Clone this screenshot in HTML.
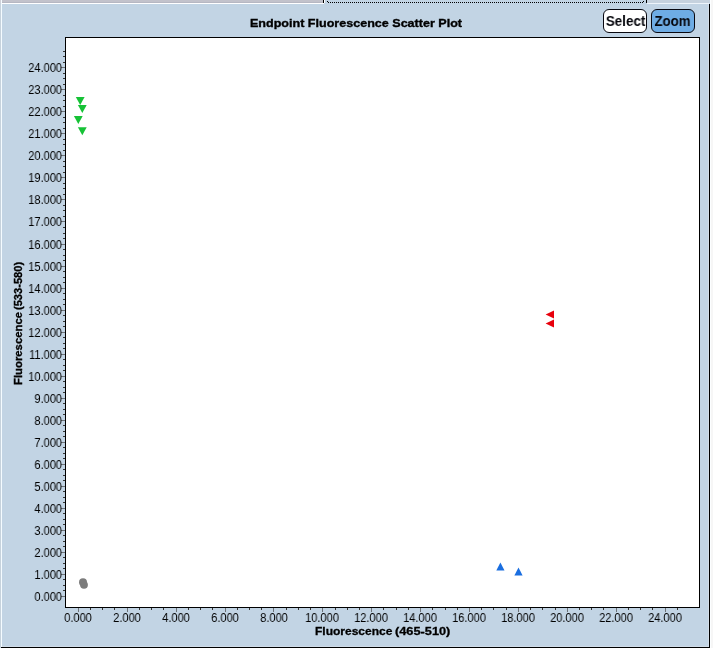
<!DOCTYPE html>
<html><head><meta charset="utf-8"><style>
html,body{margin:0;padding:0;}
*{will-change:transform;}
body{width:713px;height:648px;position:relative;overflow:hidden;background:#c2d4e4;font-family:"Liberation Sans",sans-serif;color:#000;}
svg{position:absolute;left:0;top:0;}
.t{position:absolute;white-space:nowrap;line-height:1;}
.title{position:absolute;left:250px;top:18px;font-weight:bold;font-size:11.3px;white-space:nowrap;line-height:1;transform-origin:0 0;transform:scaleX(1.111);-webkit-text-stroke:0.35px #000;}
.btn{position:absolute;top:9px;height:22px;border:1px solid #080810;border-radius:6px;box-sizing:content-box;}
.btn span{position:absolute;left:0;right:0;top:0;text-align:center;font-weight:bold;font-size:14px;line-height:23px;color:#05060c;white-space:nowrap;transform:scaleX(0.93);}
.yl{position:absolute;left:0;width:62px;text-align:right;font-size:12px;line-height:14px;height:14px;white-space:nowrap;transform-origin:62px 0;transform:scaleX(0.92);}
.xl{position:absolute;top:611px;width:60px;text-align:center;font-size:12px;line-height:14px;height:14px;white-space:nowrap;transform:scaleX(0.92);}
.xlab{position:absolute;left:315px;top:624px;font-weight:bold;font-size:11.3px;line-height:14px;white-space:nowrap;transform-origin:0 0;transform:scaleX(1.09);-webkit-text-stroke:0.3px #000;}
.ylab{position:absolute;left:11px;top:384px;transform-origin:0 0;transform:rotate(-90deg);font-weight:bold;font-size:11.1px;line-height:14px;white-space:nowrap;-webkit-text-stroke:0.3px #000;}
</style></head><body>
<svg width="713" height="648" shape-rendering="crispEdges">
<rect x="0" y="0" width="323" height="3" fill="#c2c2cb"/>
<rect x="0" y="2" width="323" height="1" fill="#b6b7c2"/>
<rect x="0" y="0" width="1" height="3" fill="#d0d0d8"/>
<rect x="323" y="0" width="1" height="3" fill="#000"/>
<rect x="324" y="0" width="1" height="3" fill="#fff"/>
<rect x="646" y="0" width="1" height="3" fill="#000"/>
<rect x="647" y="0" width="63" height="3" fill="#c6d2de"/>
<rect x="0" y="3" width="324" height="1" fill="#fff"/>
<rect x="647" y="3" width="62" height="1" fill="#eef4fa"/>
<rect x="0" y="3" width="1" height="645" fill="#c6d2dc"/>
<rect x="1" y="0" width="1" height="647" fill="#f4fbff"/>
<rect x="708" y="4" width="1" height="643" fill="#d2dde8"/>
<rect x="2" y="646" width="707" height="1" fill="#d0dce8"/>
<rect x="1" y="647" width="709" height="1" fill="#000"/>
<rect x="709" y="4" width="1" height="644" fill="#000"/>
<rect x="710" y="0" width="3" height="648" fill="#f6f6f6"/>
<rect x="710" y="0" width="1" height="648" fill="#fcfeff"/>
<rect x="328" y="2" width="1" height="1" fill="#000"/>
<rect x="330" y="2" width="1" height="1" fill="#000"/>
<rect x="332" y="2" width="1" height="1" fill="#000"/>
<rect x="334" y="2" width="1" height="1" fill="#000"/>
<rect x="336" y="2" width="1" height="1" fill="#000"/>
<rect x="338" y="2" width="1" height="1" fill="#000"/>
<rect x="340" y="2" width="1" height="1" fill="#000"/>
<rect x="342" y="2" width="1" height="1" fill="#000"/>
<rect x="344" y="2" width="1" height="1" fill="#000"/>
<rect x="346" y="2" width="1" height="1" fill="#000"/>
<rect x="348" y="2" width="1" height="1" fill="#000"/>
<rect x="350" y="2" width="1" height="1" fill="#000"/>
<rect x="352" y="2" width="1" height="1" fill="#000"/>
<rect x="354" y="2" width="1" height="1" fill="#000"/>
<rect x="356" y="2" width="1" height="1" fill="#000"/>
<rect x="358" y="2" width="1" height="1" fill="#000"/>
<rect x="360" y="2" width="1" height="1" fill="#000"/>
<rect x="362" y="2" width="1" height="1" fill="#000"/>
<rect x="364" y="2" width="1" height="1" fill="#000"/>
<rect x="366" y="2" width="1" height="1" fill="#000"/>
<rect x="368" y="2" width="1" height="1" fill="#000"/>
<rect x="370" y="2" width="1" height="1" fill="#000"/>
<rect x="372" y="2" width="1" height="1" fill="#000"/>
<rect x="374" y="2" width="1" height="1" fill="#000"/>
<rect x="376" y="2" width="1" height="1" fill="#000"/>
<rect x="378" y="2" width="1" height="1" fill="#000"/>
<rect x="380" y="2" width="1" height="1" fill="#000"/>
<rect x="382" y="2" width="1" height="1" fill="#000"/>
<rect x="384" y="2" width="1" height="1" fill="#000"/>
<rect x="386" y="2" width="1" height="1" fill="#000"/>
<rect x="388" y="2" width="1" height="1" fill="#000"/>
<rect x="390" y="2" width="1" height="1" fill="#000"/>
<rect x="392" y="2" width="1" height="1" fill="#000"/>
<rect x="394" y="2" width="1" height="1" fill="#000"/>
<rect x="396" y="2" width="1" height="1" fill="#000"/>
<rect x="398" y="2" width="1" height="1" fill="#000"/>
<rect x="400" y="2" width="1" height="1" fill="#000"/>
<rect x="402" y="2" width="1" height="1" fill="#000"/>
<rect x="404" y="2" width="1" height="1" fill="#000"/>
<rect x="406" y="2" width="1" height="1" fill="#000"/>
<rect x="408" y="2" width="1" height="1" fill="#000"/>
<rect x="410" y="2" width="1" height="1" fill="#000"/>
<rect x="412" y="2" width="1" height="1" fill="#000"/>
<rect x="414" y="2" width="1" height="1" fill="#000"/>
<rect x="416" y="2" width="1" height="1" fill="#000"/>
<rect x="418" y="2" width="1" height="1" fill="#000"/>
<rect x="420" y="2" width="1" height="1" fill="#000"/>
<rect x="422" y="2" width="1" height="1" fill="#000"/>
<rect x="424" y="2" width="1" height="1" fill="#000"/>
<rect x="426" y="2" width="1" height="1" fill="#000"/>
<rect x="428" y="2" width="1" height="1" fill="#000"/>
<rect x="430" y="2" width="1" height="1" fill="#000"/>
<rect x="432" y="2" width="1" height="1" fill="#000"/>
<rect x="434" y="2" width="1" height="1" fill="#000"/>
<rect x="436" y="2" width="1" height="1" fill="#000"/>
<rect x="438" y="2" width="1" height="1" fill="#000"/>
<rect x="440" y="2" width="1" height="1" fill="#000"/>
<rect x="442" y="2" width="1" height="1" fill="#000"/>
<rect x="444" y="2" width="1" height="1" fill="#000"/>
<rect x="446" y="2" width="1" height="1" fill="#000"/>
<rect x="448" y="2" width="1" height="1" fill="#000"/>
<rect x="450" y="2" width="1" height="1" fill="#000"/>
<rect x="452" y="2" width="1" height="1" fill="#000"/>
<rect x="454" y="2" width="1" height="1" fill="#000"/>
<rect x="456" y="2" width="1" height="1" fill="#000"/>
<rect x="458" y="2" width="1" height="1" fill="#000"/>
<rect x="460" y="2" width="1" height="1" fill="#000"/>
<rect x="462" y="2" width="1" height="1" fill="#000"/>
<rect x="464" y="2" width="1" height="1" fill="#000"/>
<rect x="466" y="2" width="1" height="1" fill="#000"/>
<rect x="468" y="2" width="1" height="1" fill="#000"/>
<rect x="470" y="2" width="1" height="1" fill="#000"/>
<rect x="472" y="2" width="1" height="1" fill="#000"/>
<rect x="474" y="2" width="1" height="1" fill="#000"/>
<rect x="476" y="2" width="1" height="1" fill="#000"/>
<rect x="478" y="2" width="1" height="1" fill="#000"/>
<rect x="480" y="2" width="1" height="1" fill="#000"/>
<rect x="482" y="2" width="1" height="1" fill="#000"/>
<rect x="484" y="2" width="1" height="1" fill="#000"/>
<rect x="486" y="2" width="1" height="1" fill="#000"/>
<rect x="488" y="2" width="1" height="1" fill="#000"/>
<rect x="490" y="2" width="1" height="1" fill="#000"/>
<rect x="492" y="2" width="1" height="1" fill="#000"/>
<rect x="494" y="2" width="1" height="1" fill="#000"/>
<rect x="496" y="2" width="1" height="1" fill="#000"/>
<rect x="498" y="2" width="1" height="1" fill="#000"/>
<rect x="500" y="2" width="1" height="1" fill="#000"/>
<rect x="502" y="2" width="1" height="1" fill="#000"/>
<rect x="504" y="2" width="1" height="1" fill="#000"/>
<rect x="506" y="2" width="1" height="1" fill="#000"/>
<rect x="508" y="2" width="1" height="1" fill="#000"/>
<rect x="510" y="2" width="1" height="1" fill="#000"/>
<rect x="512" y="2" width="1" height="1" fill="#000"/>
<rect x="514" y="2" width="1" height="1" fill="#000"/>
<rect x="516" y="2" width="1" height="1" fill="#000"/>
<rect x="518" y="2" width="1" height="1" fill="#000"/>
<rect x="520" y="2" width="1" height="1" fill="#000"/>
<rect x="522" y="2" width="1" height="1" fill="#000"/>
<rect x="524" y="2" width="1" height="1" fill="#000"/>
<rect x="526" y="2" width="1" height="1" fill="#000"/>
<rect x="528" y="2" width="1" height="1" fill="#000"/>
<rect x="530" y="2" width="1" height="1" fill="#000"/>
<rect x="532" y="2" width="1" height="1" fill="#000"/>
<rect x="534" y="2" width="1" height="1" fill="#000"/>
<rect x="536" y="2" width="1" height="1" fill="#000"/>
<rect x="538" y="2" width="1" height="1" fill="#000"/>
<rect x="540" y="2" width="1" height="1" fill="#000"/>
<rect x="542" y="2" width="1" height="1" fill="#000"/>
<rect x="544" y="2" width="1" height="1" fill="#000"/>
<rect x="546" y="2" width="1" height="1" fill="#000"/>
<rect x="548" y="2" width="1" height="1" fill="#000"/>
<rect x="550" y="2" width="1" height="1" fill="#000"/>
<rect x="552" y="2" width="1" height="1" fill="#000"/>
<rect x="554" y="2" width="1" height="1" fill="#000"/>
<rect x="556" y="2" width="1" height="1" fill="#000"/>
<rect x="558" y="2" width="1" height="1" fill="#000"/>
<rect x="560" y="2" width="1" height="1" fill="#000"/>
<rect x="562" y="2" width="1" height="1" fill="#000"/>
<rect x="564" y="2" width="1" height="1" fill="#000"/>
<rect x="566" y="2" width="1" height="1" fill="#000"/>
<rect x="568" y="2" width="1" height="1" fill="#000"/>
<rect x="570" y="2" width="1" height="1" fill="#000"/>
<rect x="572" y="2" width="1" height="1" fill="#000"/>
<rect x="574" y="2" width="1" height="1" fill="#000"/>
<rect x="576" y="2" width="1" height="1" fill="#000"/>
<rect x="578" y="2" width="1" height="1" fill="#000"/>
<rect x="580" y="2" width="1" height="1" fill="#000"/>
<rect x="582" y="2" width="1" height="1" fill="#000"/>
<rect x="584" y="2" width="1" height="1" fill="#000"/>
<rect x="586" y="2" width="1" height="1" fill="#000"/>
<rect x="588" y="2" width="1" height="1" fill="#000"/>
<rect x="590" y="2" width="1" height="1" fill="#000"/>
<rect x="592" y="2" width="1" height="1" fill="#000"/>
<rect x="594" y="2" width="1" height="1" fill="#000"/>
<rect x="596" y="2" width="1" height="1" fill="#000"/>
<rect x="598" y="2" width="1" height="1" fill="#000"/>
<rect x="600" y="2" width="1" height="1" fill="#000"/>
<rect x="602" y="2" width="1" height="1" fill="#000"/>
<rect x="604" y="2" width="1" height="1" fill="#000"/>
<rect x="606" y="2" width="1" height="1" fill="#000"/>
<rect x="608" y="2" width="1" height="1" fill="#000"/>
<rect x="610" y="2" width="1" height="1" fill="#000"/>
<rect x="612" y="2" width="1" height="1" fill="#000"/>
<rect x="614" y="2" width="1" height="1" fill="#000"/>
<rect x="616" y="2" width="1" height="1" fill="#000"/>
<rect x="618" y="2" width="1" height="1" fill="#000"/>
<rect x="620" y="2" width="1" height="1" fill="#000"/>
<rect x="622" y="2" width="1" height="1" fill="#000"/>
<rect x="624" y="2" width="1" height="1" fill="#000"/>
<rect x="626" y="2" width="1" height="1" fill="#000"/>
<rect x="628" y="2" width="1" height="1" fill="#000"/>
<rect x="630" y="2" width="1" height="1" fill="#000"/>
<rect x="632" y="2" width="1" height="1" fill="#000"/>
<rect x="634" y="2" width="1" height="1" fill="#000"/>
<rect x="636" y="2" width="1" height="1" fill="#000"/>
<rect x="638" y="2" width="1" height="1" fill="#000"/>
<rect x="640" y="2" width="1" height="1" fill="#000"/>
<rect x="642" y="2" width="1" height="1" fill="#000"/>
<rect x="327" y="1" width="1" height="1" fill="#000"/>
<rect x="643" y="1" width="1" height="1" fill="#000"/>
<rect x="65" y="37" width="635" height="571" fill="#000"/>
<rect x="66" y="38" width="633" height="569" fill="#fff"/>
<rect x="61" y="596" width="4" height="1" fill="#6c7278"/>
<rect x="63" y="590" width="2" height="1" fill="#343434"/>
<rect x="63" y="585" width="2" height="1" fill="#343434"/>
<rect x="63" y="579" width="2" height="1" fill="#343434"/>
<rect x="61" y="574" width="4" height="1" fill="#6c7278"/>
<rect x="63" y="568" width="2" height="1" fill="#343434"/>
<rect x="63" y="563" width="2" height="1" fill="#343434"/>
<rect x="63" y="557" width="2" height="1" fill="#343434"/>
<rect x="61" y="552" width="4" height="1" fill="#6c7278"/>
<rect x="63" y="546" width="2" height="1" fill="#343434"/>
<rect x="63" y="541" width="2" height="1" fill="#343434"/>
<rect x="63" y="535" width="2" height="1" fill="#343434"/>
<rect x="61" y="530" width="4" height="1" fill="#6c7278"/>
<rect x="63" y="524" width="2" height="1" fill="#343434"/>
<rect x="63" y="519" width="2" height="1" fill="#343434"/>
<rect x="63" y="513" width="2" height="1" fill="#343434"/>
<rect x="61" y="508" width="4" height="1" fill="#6c7278"/>
<rect x="63" y="502" width="2" height="1" fill="#343434"/>
<rect x="63" y="497" width="2" height="1" fill="#343434"/>
<rect x="63" y="491" width="2" height="1" fill="#343434"/>
<rect x="61" y="486" width="4" height="1" fill="#6c7278"/>
<rect x="63" y="480" width="2" height="1" fill="#343434"/>
<rect x="63" y="475" width="2" height="1" fill="#343434"/>
<rect x="63" y="469" width="2" height="1" fill="#343434"/>
<rect x="61" y="464" width="4" height="1" fill="#6c7278"/>
<rect x="63" y="458" width="2" height="1" fill="#343434"/>
<rect x="63" y="453" width="2" height="1" fill="#343434"/>
<rect x="63" y="447" width="2" height="1" fill="#343434"/>
<rect x="61" y="442" width="4" height="1" fill="#6c7278"/>
<rect x="63" y="436" width="2" height="1" fill="#343434"/>
<rect x="63" y="431" width="2" height="1" fill="#343434"/>
<rect x="63" y="425" width="2" height="1" fill="#343434"/>
<rect x="61" y="420" width="4" height="1" fill="#6c7278"/>
<rect x="63" y="414" width="2" height="1" fill="#343434"/>
<rect x="63" y="409" width="2" height="1" fill="#343434"/>
<rect x="63" y="403" width="2" height="1" fill="#343434"/>
<rect x="61" y="398" width="4" height="1" fill="#6c7278"/>
<rect x="63" y="392" width="2" height="1" fill="#343434"/>
<rect x="63" y="387" width="2" height="1" fill="#343434"/>
<rect x="63" y="381" width="2" height="1" fill="#343434"/>
<rect x="61" y="376" width="4" height="1" fill="#6c7278"/>
<rect x="63" y="370" width="2" height="1" fill="#343434"/>
<rect x="63" y="365" width="2" height="1" fill="#343434"/>
<rect x="63" y="359" width="2" height="1" fill="#343434"/>
<rect x="61" y="354" width="4" height="1" fill="#6c7278"/>
<rect x="63" y="348" width="2" height="1" fill="#343434"/>
<rect x="63" y="343" width="2" height="1" fill="#343434"/>
<rect x="63" y="337" width="2" height="1" fill="#343434"/>
<rect x="61" y="332" width="4" height="1" fill="#6c7278"/>
<rect x="63" y="326" width="2" height="1" fill="#343434"/>
<rect x="63" y="321" width="2" height="1" fill="#343434"/>
<rect x="63" y="315" width="2" height="1" fill="#343434"/>
<rect x="61" y="310" width="4" height="1" fill="#6c7278"/>
<rect x="63" y="304" width="2" height="1" fill="#343434"/>
<rect x="63" y="299" width="2" height="1" fill="#343434"/>
<rect x="63" y="293" width="2" height="1" fill="#343434"/>
<rect x="61" y="288" width="4" height="1" fill="#6c7278"/>
<rect x="63" y="282" width="2" height="1" fill="#343434"/>
<rect x="63" y="277" width="2" height="1" fill="#343434"/>
<rect x="63" y="271" width="2" height="1" fill="#343434"/>
<rect x="61" y="266" width="4" height="1" fill="#6c7278"/>
<rect x="63" y="260" width="2" height="1" fill="#343434"/>
<rect x="63" y="255" width="2" height="1" fill="#343434"/>
<rect x="63" y="249" width="2" height="1" fill="#343434"/>
<rect x="61" y="244" width="4" height="1" fill="#6c7278"/>
<rect x="63" y="238" width="2" height="1" fill="#343434"/>
<rect x="63" y="233" width="2" height="1" fill="#343434"/>
<rect x="63" y="227" width="2" height="1" fill="#343434"/>
<rect x="61" y="221" width="4" height="1" fill="#6c7278"/>
<rect x="63" y="216" width="2" height="1" fill="#343434"/>
<rect x="63" y="210" width="2" height="1" fill="#343434"/>
<rect x="63" y="205" width="2" height="1" fill="#343434"/>
<rect x="61" y="199" width="4" height="1" fill="#6c7278"/>
<rect x="63" y="194" width="2" height="1" fill="#343434"/>
<rect x="63" y="188" width="2" height="1" fill="#343434"/>
<rect x="63" y="183" width="2" height="1" fill="#343434"/>
<rect x="61" y="177" width="4" height="1" fill="#6c7278"/>
<rect x="63" y="172" width="2" height="1" fill="#343434"/>
<rect x="63" y="166" width="2" height="1" fill="#343434"/>
<rect x="63" y="161" width="2" height="1" fill="#343434"/>
<rect x="61" y="155" width="4" height="1" fill="#6c7278"/>
<rect x="63" y="150" width="2" height="1" fill="#343434"/>
<rect x="63" y="144" width="2" height="1" fill="#343434"/>
<rect x="63" y="139" width="2" height="1" fill="#343434"/>
<rect x="61" y="133" width="4" height="1" fill="#6c7278"/>
<rect x="63" y="128" width="2" height="1" fill="#343434"/>
<rect x="63" y="122" width="2" height="1" fill="#343434"/>
<rect x="63" y="117" width="2" height="1" fill="#343434"/>
<rect x="61" y="111" width="4" height="1" fill="#6c7278"/>
<rect x="63" y="106" width="2" height="1" fill="#343434"/>
<rect x="63" y="100" width="2" height="1" fill="#343434"/>
<rect x="63" y="95" width="2" height="1" fill="#343434"/>
<rect x="61" y="89" width="4" height="1" fill="#6c7278"/>
<rect x="63" y="84" width="2" height="1" fill="#343434"/>
<rect x="63" y="78" width="2" height="1" fill="#343434"/>
<rect x="63" y="73" width="2" height="1" fill="#343434"/>
<rect x="61" y="67" width="4" height="1" fill="#6c7278"/>
<rect x="63" y="62" width="2" height="1" fill="#343434"/>
<rect x="63" y="56" width="2" height="1" fill="#343434"/>
<rect x="63" y="51" width="2" height="1" fill="#343434"/>
<rect x="78" y="608" width="1" height="4" fill="#6c7278"/>
<rect x="90" y="608" width="1" height="2" fill="#343434"/>
<rect x="102" y="608" width="1" height="2" fill="#343434"/>
<rect x="114" y="608" width="1" height="2" fill="#343434"/>
<rect x="127" y="608" width="1" height="4" fill="#6c7278"/>
<rect x="139" y="608" width="1" height="2" fill="#343434"/>
<rect x="151" y="608" width="1" height="2" fill="#343434"/>
<rect x="163" y="608" width="1" height="2" fill="#343434"/>
<rect x="176" y="608" width="1" height="4" fill="#6c7278"/>
<rect x="188" y="608" width="1" height="2" fill="#343434"/>
<rect x="200" y="608" width="1" height="2" fill="#343434"/>
<rect x="212" y="608" width="1" height="2" fill="#343434"/>
<rect x="225" y="608" width="1" height="4" fill="#6c7278"/>
<rect x="237" y="608" width="1" height="2" fill="#343434"/>
<rect x="249" y="608" width="1" height="2" fill="#343434"/>
<rect x="261" y="608" width="1" height="2" fill="#343434"/>
<rect x="273" y="608" width="1" height="4" fill="#6c7278"/>
<rect x="286" y="608" width="1" height="2" fill="#343434"/>
<rect x="298" y="608" width="1" height="2" fill="#343434"/>
<rect x="310" y="608" width="1" height="2" fill="#343434"/>
<rect x="322" y="608" width="1" height="4" fill="#6c7278"/>
<rect x="335" y="608" width="1" height="2" fill="#343434"/>
<rect x="347" y="608" width="1" height="2" fill="#343434"/>
<rect x="359" y="608" width="1" height="2" fill="#343434"/>
<rect x="371" y="608" width="1" height="4" fill="#6c7278"/>
<rect x="383" y="608" width="1" height="2" fill="#343434"/>
<rect x="396" y="608" width="1" height="2" fill="#343434"/>
<rect x="408" y="608" width="1" height="2" fill="#343434"/>
<rect x="420" y="608" width="1" height="4" fill="#6c7278"/>
<rect x="432" y="608" width="1" height="2" fill="#343434"/>
<rect x="445" y="608" width="1" height="2" fill="#343434"/>
<rect x="457" y="608" width="1" height="2" fill="#343434"/>
<rect x="469" y="608" width="1" height="4" fill="#6c7278"/>
<rect x="481" y="608" width="1" height="2" fill="#343434"/>
<rect x="493" y="608" width="1" height="2" fill="#343434"/>
<rect x="506" y="608" width="1" height="2" fill="#343434"/>
<rect x="518" y="608" width="1" height="4" fill="#6c7278"/>
<rect x="530" y="608" width="1" height="2" fill="#343434"/>
<rect x="542" y="608" width="1" height="2" fill="#343434"/>
<rect x="555" y="608" width="1" height="2" fill="#343434"/>
<rect x="567" y="608" width="1" height="4" fill="#6c7278"/>
<rect x="579" y="608" width="1" height="2" fill="#343434"/>
<rect x="591" y="608" width="1" height="2" fill="#343434"/>
<rect x="603" y="608" width="1" height="2" fill="#343434"/>
<rect x="616" y="608" width="1" height="4" fill="#6c7278"/>
<rect x="628" y="608" width="1" height="2" fill="#343434"/>
<rect x="640" y="608" width="1" height="2" fill="#343434"/>
<rect x="652" y="608" width="1" height="2" fill="#343434"/>
<rect x="665" y="608" width="1" height="4" fill="#6c7278"/>
<rect x="677" y="608" width="1" height="2" fill="#343434"/>
</svg>
<div class="title">Endpoint Fluorescence Scatter Plot</div>
<div class="btn" style="left:603px;width:42px;background:#fff;"><span style="left:1px;transform:scaleX(0.96)">Select</span></div>
<div class="btn" style="left:651px;width:42px;background:#6eace4;"><span style="left:-1px;transform:scaleX(0.95)">Zoom</span></div>
<div class="yl" style="top:590.2px">0.000</div><div class="yl" style="top:568.2px">1.000</div><div class="yl" style="top:546.2px">2.000</div><div class="yl" style="top:524.2px">3.000</div><div class="yl" style="top:502.2px">4.000</div><div class="yl" style="top:480.2px">5.000</div><div class="yl" style="top:458.2px">6.000</div><div class="yl" style="top:436.2px">7.000</div><div class="yl" style="top:414.2px">8.000</div><div class="yl" style="top:392.2px">9.000</div><div class="yl" style="top:370.2px">10.000</div><div class="yl" style="top:348.2px">11.000</div><div class="yl" style="top:326.2px">12.000</div><div class="yl" style="top:304.2px">13.000</div><div class="yl" style="top:282.2px">14.000</div><div class="yl" style="top:260.2px">15.000</div><div class="yl" style="top:238.2px">16.000</div><div class="yl" style="top:215.2px">17.000</div><div class="yl" style="top:193.2px">18.000</div><div class="yl" style="top:171.2px">19.000</div><div class="yl" style="top:149.2px">20.000</div><div class="yl" style="top:127.2px">21.000</div><div class="yl" style="top:105.2px">22.000</div><div class="yl" style="top:83.2px">23.000</div><div class="yl" style="top:61.2px">24.000</div><div class="xl" style="left:48.3px">0.000</div><div class="xl" style="left:97.2px">2.000</div><div class="xl" style="left:146.1px">4.000</div><div class="xl" style="left:195.0px">6.000</div><div class="xl" style="left:243.9px">8.000</div><div class="xl" style="left:292.3px">10.000</div><div class="xl" style="left:341.2px">12.000</div><div class="xl" style="left:390.1px">14.000</div><div class="xl" style="left:439.0px">16.000</div><div class="xl" style="left:487.9px">18.000</div><div class="xl" style="left:536.8px">20.000</div><div class="xl" style="left:585.7px">22.000</div><div class="xl" style="left:634.6px">24.000</div>
<div class="xlab" style="left:315px;transform:scaleX(1.063)">Fluorescence</div><div class="xlab" style="left:395px;transform:scaleX(1.13)">(465-510)</div>
<div class="ylab" style="top:384.5px;transform:rotate(-90deg) scaleX(1.02)">Fluorescence</div><div class="ylab" style="top:309.5px;transform:rotate(-90deg) scaleX(1.0)">(533-580)</div>
<svg width="713" height="648">
<polygon points="75.8,97 84.60000000000001,97 80.2,105" fill="#16c236"/><polygon points="77.89999999999999,105 86.7,105 82.3,113" fill="#16c236"/><polygon points="73.89999999999999,116 82.7,116 78.3,124" fill="#16c236"/><polygon points="77.89999999999999,127.3 86.7,127.3 82.3,135.3" fill="#16c236"/><polygon points="554,310.4 554,318.6 545.6,314.5" fill="#e8000c"/><polygon points="554,319.4 554,327.6 545.6,323.5" fill="#e8000c"/><polygon points="500.4,562.6 504.5,570.4 496.29999999999995,570.4" fill="#1a6ee0"/><polygon points="518.5,567.6 522.6,575.4 514.4,575.4" fill="#1a6ee0"/><circle cx="83" cy="582.2" r="4" fill="#7c7c7c"/><circle cx="84" cy="584.8" r="3.9" fill="#7c7c7c"/>
</svg>
</body></html>
